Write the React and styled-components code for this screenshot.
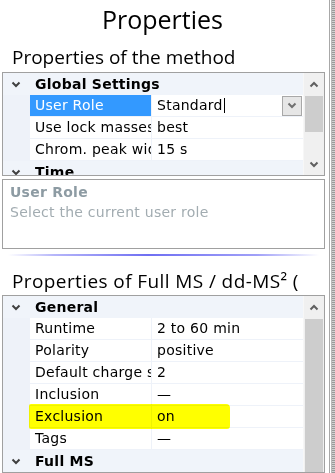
import React from 'react';
import styled, { createGlobalStyle } from 'styled-components';

const GlobalStyle = createGlobalStyle`
  html, body {
    margin: 0;
    padding: 0;
    background: #fff;
  }
  body {
    width: 335px;
    height: 473px;
    overflow: hidden;
  }
`;

const Page = styled.div`
  display: flex;
  width: 335px;
  height: 473px;
  overflow: hidden;
  background: #fff;
`;

const Main = styled.div`
  width: 323px;
  padding-left: 2px;
  display: flex;
  flex-direction: column;
  flex-shrink: 0;
`;

const Splitter = styled.div`
  width: 10px;
  flex-shrink: 0;
  display: flex;
  padding-left: 4px;
  box-sizing: border-box;
`;

const SplitLine = styled.div`
  width: 1px;
  background: #a8a8a8;
  margin-right: 1px;
`;

const SplitGrip = styled.div`
  flex: 1;
  background: repeating-linear-gradient(
    to bottom,
    #9a9a9a 0px,
    #9a9a9a 1px,
    #d0d0d0 1px,
    #d0d0d0 2px
  );
  border-left: 1px solid #b8b8b8;
`;

const Title = styled.div`
  font-family: 'Open Sans', 'Liberation Sans', sans-serif;
  font-size: 25px;
  line-height: 38px;
  height: 38px;
  text-align: center;
  color: #000;
  margin-left: -2px;
`;

const SectionTitle = styled.div`
  font-family: 'Open Sans', 'Liberation Sans', sans-serif;
  font-size: 19px;
  color: #000;
  white-space: nowrap;
  overflow: hidden;
  padding-left: 10px;
  padding-top: ${(p) => p.$pad}px;
  line-height: ${(p) => p.$lh}px;
  letter-spacing: ${(p) => p.$ls || 0}px;
`;

const Grid = styled.div`
  border: 1px solid #a0a0a0;
  display: flex;
  height: ${(p) => (p.$h ? `${p.$h}px` : 'auto')};
  flex: ${(p) => (p.$h ? 'none' : 1)};
  overflow: hidden;
  background: #fff;
  font-family: 'DejaVu Sans', Verdana, sans-serif;
  font-size: 14px;
  letter-spacing: 0.25px;
  color: #000;
`;

const Rows = styled.div`
  flex: 1;
  min-width: 0;
  background: #eef2f9;
`;

const CategoryRow = styled.div`
  display: flex;
  align-items: center;
  height: 22px;
  background: #f0f4fa;
  font-weight: bold;
`;

const Chevron = styled.span`
  width: 27px;
  display: flex;
  align-items: center;
  justify-content: center;
  flex-shrink: 0;
  padding-right: 2px;
  box-sizing: border-box;
`;

const CategoryLabel = styled.span`
  padding-left: 5px;
  line-height: 22px;
`;

const PropRow = styled.div`
  position: relative;
  display: flex;
  height: 21px;
  border-bottom: 1px solid #eef2f9;
`;

const Gutter = styled.span`
  width: 27px;
  flex-shrink: 0;
  background: #eef2f9;
`;

const NameCell = styled.span`
  width: 122px;
  flex-shrink: 0;
  padding-left: 5px;
  box-sizing: border-box;
  border-right: 1px solid #eef2f9;
  white-space: nowrap;
  overflow: hidden;
  line-height: 21px;
  background: ${(p) => (p.$selected ? '#3399ff' : '#fff')};
  color: ${(p) => (p.$selected ? '#fff' : '#000')};
`;

const ValueCell = styled.span`
  flex: 1;
  min-width: 0;
  display: flex;
  align-items: center;
  padding-left: 5px;
  white-space: nowrap;
  overflow: hidden;
  line-height: 21px;
  background: #fff;
`;

const Caret = styled.span`
  width: 1px;
  height: 15px;
  background: #000;
  margin-left: 1px;
`;

const DropButton = styled.span`
  margin-left: auto;
  margin-right: 1px;
  width: 20px;
  height: 20px;
  box-sizing: border-box;
  border: 1px solid #a8a8a8;
  background: #e6e6e6;
  display: flex;
  align-items: center;
  justify-content: center;
`;

const Marker = styled.span`
  position: absolute;
  left: 26px;
  top: -2px;
  width: 201px;
  height: 25px;
  background: #ffff00;
  border-radius: 2px 4px 3px 2px;
  mix-blend-mode: multiply;
  z-index: 2;
  pointer-events: none;
`;

const ScrollBar = styled.div`
  width: 20px;
  flex-shrink: 0;
  background: #f0f0f0;
  display: flex;
  flex-direction: column;
  border-left: 1px solid #f7f7f7;
`;

const ArrowButton = styled.div`
  height: 22px;
  flex-shrink: 0;
  display: flex;
  align-items: center;
  justify-content: center;
`;

const Thumb = styled.div`
  margin: 1px 1px 0 1px;
  background: #cdcdcd;
  height: ${(p) => (p.$h ? `${p.$h}px` : 'auto')};
  flex: ${(p) => (p.$h ? 'none' : 1)};
`;

const Spacer = styled.div`
  flex: 1;
`;

const Description = styled.div`
  margin-top: 3px;
  height: 70px;
  box-sizing: border-box;
  border: 1px solid #a0a0a0;
  padding: 2px 7px;
  font-family: 'DejaVu Sans', Verdana, sans-serif;
  font-size: 14px;
  letter-spacing: 0.25px;
  line-height: 20px;
`;

const DescTitle = styled.div`
  font-weight: bold;
  color: #8d9ba3;
`;

const DescText = styled.div`
  color: #a2acb1;
`;

const Separator = styled.div`
  margin: 5px 6px 0 6px;
  height: 2px;
  background: linear-gradient(
    to right,
    rgba(120, 120, 245, 0) 0%,
    rgba(120, 120, 245, 0.55) 15%,
    #6f6ff2 45%,
    rgba(120, 120, 245, 0.7) 80%,
    rgba(120, 120, 245, 0) 100%
  );
`;

const Down = ({ color = '#404040', w = 10 }) => (
  <svg width={w} height="7" viewBox="0 0 10 7">
    <polyline points="1.5,1.5 5,5 8.5,1.5" fill="none" stroke={color} strokeWidth="2" />
  </svg>
);

const Up = ({ color = '#606060' }) => (
  <svg width="10" height="7" viewBox="0 0 10 7">
    <polyline points="1.5,5.5 5,2 8.5,5.5" fill="none" stroke={color} strokeWidth="2" />
  </svg>
);

const Category = ({ label }) => (
  <CategoryRow>
    <Chevron>
      <Down />
    </Chevron>
    <CategoryLabel>{label}</CategoryLabel>
  </CategoryRow>
);

const Property = ({ name, value, selected, marked, editing }) => (
  <PropRow>
    <Gutter />
    <NameCell $selected={selected}>{name}</NameCell>
    <ValueCell>
      {value}
      {editing && <Caret />}
      {editing && (
        <DropButton>
          <Down color="#707070" w={10} />
        </DropButton>
      )}
    </ValueCell>
    {marked && <Marker />}
  </PropRow>
);

const Scroll = ({ thumb, down }) => (
  <ScrollBar>
    <ArrowButton>
      <Up />
    </ArrowButton>
    <Thumb $h={thumb} />
    {down && <Spacer />}
    {down && (
      <ArrowButton>
        <Down color="#606060" />
      </ArrowButton>
    )}
  </ScrollBar>
);

const App = () => (
  <Page>
    <GlobalStyle />
    <Main>
      <Title>Properties</Title>
      <SectionTitle $pad={4} $lh={30}>
        Properties of the method
      </SectionTitle>
      <Grid $h={102}>
        <Rows>
          <Category label="Global Settings" />
          <Property name="User Role" value="Standard" selected editing />
          <Property name="Use lock masses" value="best" />
          <Property name="Chrom. peak width" value="15 s" />
          <Category label="Time" />
        </Rows>
        <Scroll thumb={36} down />
      </Grid>
      <Description>
        <DescTitle>User Role</DescTitle>
        <DescText>Select the current user role</DescText>
      </Description>
      <Separator />
      <SectionTitle $pad={12} $lh={27} $ls={0.4}>
        Properties of Full MS / dd-MS² (
      </SectionTitle>
      <Grid>
        <Rows>
          <Category label="General" />
          <Property name="Runtime" value="2 to 60 min" />
          <Property name="Polarity" value="positive" />
          <Property name="Default charge state" value="2" />
          <Property name="Inclusion" value="—" />
          <Property name="Exclusion" value="on" marked />
          <Property name="Tags" value="—" />
          <Category label="Full MS" />
          <Property name="Resolution" value="70,000" />
        </Rows>
        <Scroll />
      </Grid>
    </Main>
    <Splitter>
      <SplitLine />
      <SplitGrip />
    </Splitter>
  </Page>
);

export default App;
